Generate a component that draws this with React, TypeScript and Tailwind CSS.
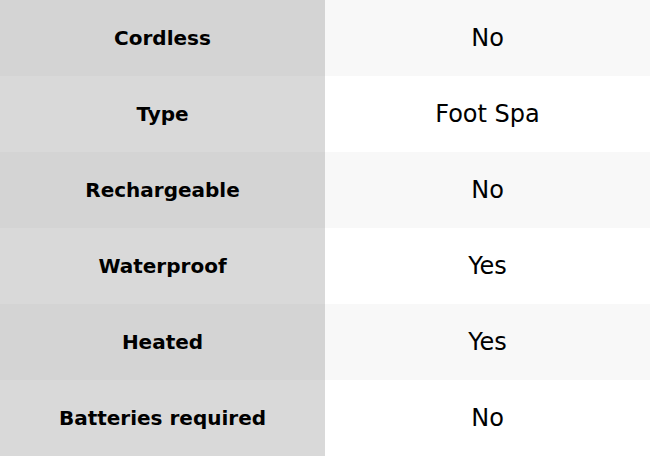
const rows = [
  ["Cordless", "No"],
  ["Type", "Foot Spa"],
  ["Rechargeable", "No"],
  ["Waterproof", "Yes"],
  ["Heated", "Yes"],
  ["Batteries required", "No"],
];

export default function App() {
  return (
    <div className="w-[650px] h-[456px] flex flex-col font-['DejaVu_Sans',sans-serif] text-black">
      {rows.map(([label, value], i) => (
        <div key={label} className="flex h-[76px]">
          <div
            className={`w-[325px] flex items-center justify-center font-bold text-[20px] ${
              i % 2 === 0 ? "bg-[#d4d4d4]" : "bg-[#d9d9d9]"
            }`}
          >
            {label}
          </div>
          <div
            className={`flex-1 flex items-center justify-center text-[24px] ${
              i % 2 === 0 ? "bg-[#f8f8f8]" : "bg-white"
            }`}
          >
            {value}
          </div>
        </div>
      ))}
    </div>
  );
}
